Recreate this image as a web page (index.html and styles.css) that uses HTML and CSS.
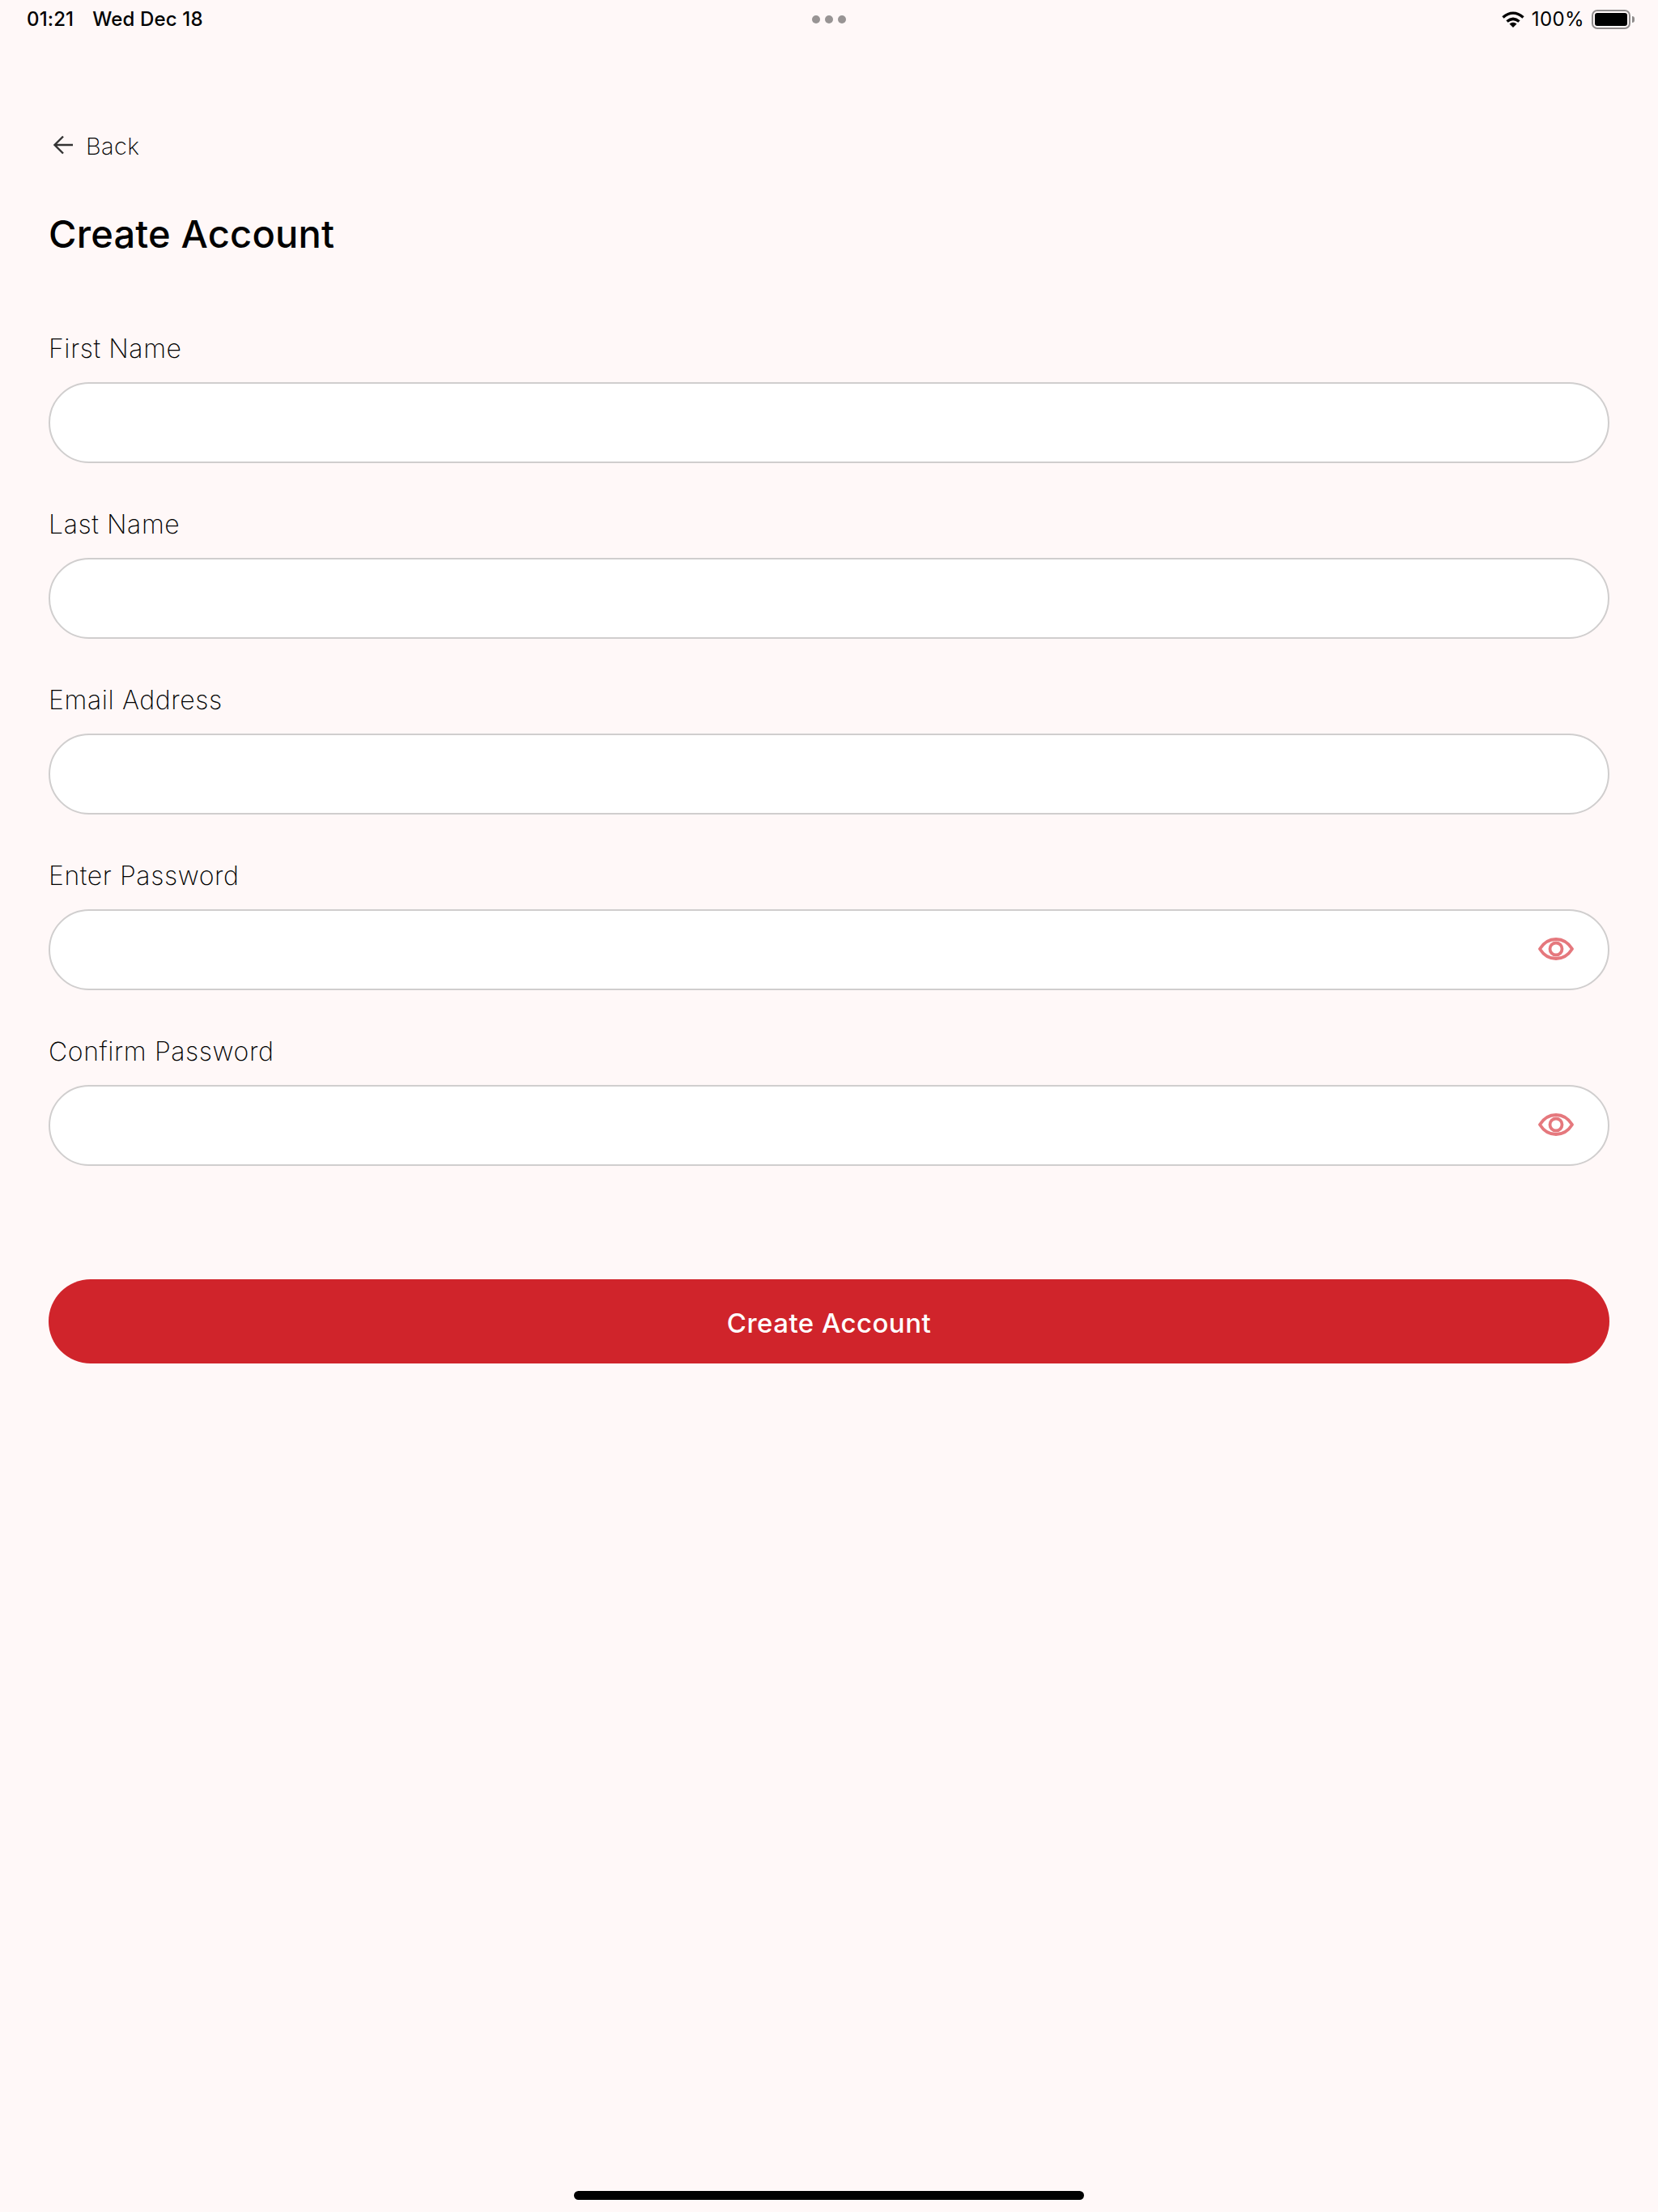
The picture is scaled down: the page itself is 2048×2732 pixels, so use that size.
FILE: index.html
```html
<!DOCTYPE html>
<html lang="en">
<head>
<meta charset="utf-8">
<title>Create Account</title>
<link rel="stylesheet" href="styles.css">
</head>
<body>
<div class="screen">
  <header class="status">
    <div class="status-left"><span>01:21</span><span>Wed Dec 18</span></div>
    <div class="dots"><i></i><i></i><i></i></div>
    <div class="status-right">
      <svg class="wifi" width="28" height="20" viewBox="0 0 28 20"><path d="M1.500 7.500C9.500 0.500 18.500 0.500 26.500 7.500" fill="none" stroke="#000" stroke-width="3.500"/><path d="M6.500 12.500C11.500 8.300 16.500 8.300 21.500 12.500" fill="none" stroke="#000" stroke-width="3.500"/><path d="M9.500 15.500C12.500 13 15.500 13 18.500 15.500L14 20Z" fill="#000"/></svg>
      <span class="pct">100%</span>
      <span class="battery"><span class="battery-fill"></span></span>
    </div>
  </header>
  <main class="content">
    <a class="back">
      <svg width="26" height="26" viewBox="0 0 26 26"><path d="M25 13H3M13 2.500 2.500 13 13 23.500" fill="none" stroke="#333" stroke-width="2.400"/></svg>
      <span>Back</span>
    </a>
    <h1 class="title">Create Account</h1>
    <form class="form">
      <div class="field"><label class="label">First Name</label><div class="input"></div></div>
      <div class="field"><label class="label">Last Name</label><div class="input"></div></div>
      <div class="field"><label class="label">Email Address</label><div class="input"></div></div>
      <div class="field"><label class="label">Enter Password</label><div class="input">
        <svg class="eye" width="44" height="30" viewBox="0 0 44 30"><path d="M2 15C12 -1 32 -1 42 15C32 31 12 31 2 15Z" fill="none" stroke="#E5787D" stroke-width="3.800" stroke-linejoin="round"/><circle cx="22" cy="15" r="7.500" fill="none" stroke="#E5787D" stroke-width="3.800"/></svg>
      </div></div>
      <div class="field"><label class="label">Confirm Password</label><div class="input">
        <svg class="eye" width="44" height="30" viewBox="0 0 44 30"><path d="M2 15C12 -1 32 -1 42 15C32 31 12 31 2 15Z" fill="none" stroke="#E5787D" stroke-width="3.800" stroke-linejoin="round"/><circle cx="22" cy="15" r="7.500" fill="none" stroke="#E5787D" stroke-width="3.800"/></svg>
      </div></div>
    </form>
    <button class="submit" type="button">Create Account</button>
  </main>
  <div class="home-bar"></div>
</div>
</body>
</html>
```
FILE: styles.css
```css
* { box-sizing: border-box; }
html, body { margin: 0; padding: 0; }
body { background: #FFF8F8; font-family: Inter, "Liberation Sans", sans-serif; color: #000; }
.screen { width: 2048px; height: 2732px; display: flex; flex-direction: column; }
.status { height: 48px; flex: none; display: grid; grid-template-columns: 1fr auto 1fr; align-items: center; padding: 0 34px 0 33px; font-size: 24px; line-height: 48px; font-weight: 500; letter-spacing: 0.150px; }
.status-left { display: flex; gap: 23px; }
.dots { display: flex; gap: 6px; }
.dots i { width: 10px; height: 10px; border-radius: 50%; background: #989494; }
.status-right { display: flex; align-items: center; justify-content: flex-end; }
.wifi { margin-right: 9px; }
.pct { font-weight: 400; margin-right: 9px; letter-spacing: 0.400px; }
.battery { position: relative; width: 48px; height: 24px; border: 2.500px solid #8F8B8B; border-radius: 7px; padding: 2px; display: block; }
.battery::after { content: ""; position: absolute; right: -7px; top: 6px; width: 3px; height: 8px; background: #8F8B8B; border-radius: 0 3px 3px 0; }
.battery-fill { display: block; height: 100%; background: #000; border-radius: 3px; }
.content { padding: 0 60px; flex: none; }
.back { display: flex; align-items: center; gap: 15px; margin: 117px 0 0 5px; height: 32px; font-size: 29px; font-weight: 250; line-height: 32px; color: #000; letter-spacing: 0.400px; }
.back svg { margin-top: -5px; }
.title { margin: 62px 0 0; font-size: 47px; line-height: 60px; font-weight: 550; letter-spacing: 0.200px; }
.form { margin-top: 92px; display: flex; flex-direction: column; gap: 56px; }
.field { display: flex; flex-direction: column; }
.label { font-size: 32px; line-height: 40px; font-weight: 250; margin-bottom: 21px; color: #000; letter-spacing: 0.600px; }
.input { height: 100px; background: #fff; border: 2px solid #D0CECE; border-radius: 50px; display: flex; align-items: center; justify-content: flex-end; padding-right: 42px; }
.eye { margin-top: -2px; }
.submit { display: block; width: 100%; height: 104px; margin-top: 140px; padding: 3px 0 0; background: #D0242B; border: 0; border-radius: 52px; color: #fff; font-family: inherit; font-size: 33px; font-weight: 500; letter-spacing: 0.450px; }
.home-bar { width: 630px; height: 11px; border-radius: 6px; background: #000; margin: auto auto 15px; }
```
